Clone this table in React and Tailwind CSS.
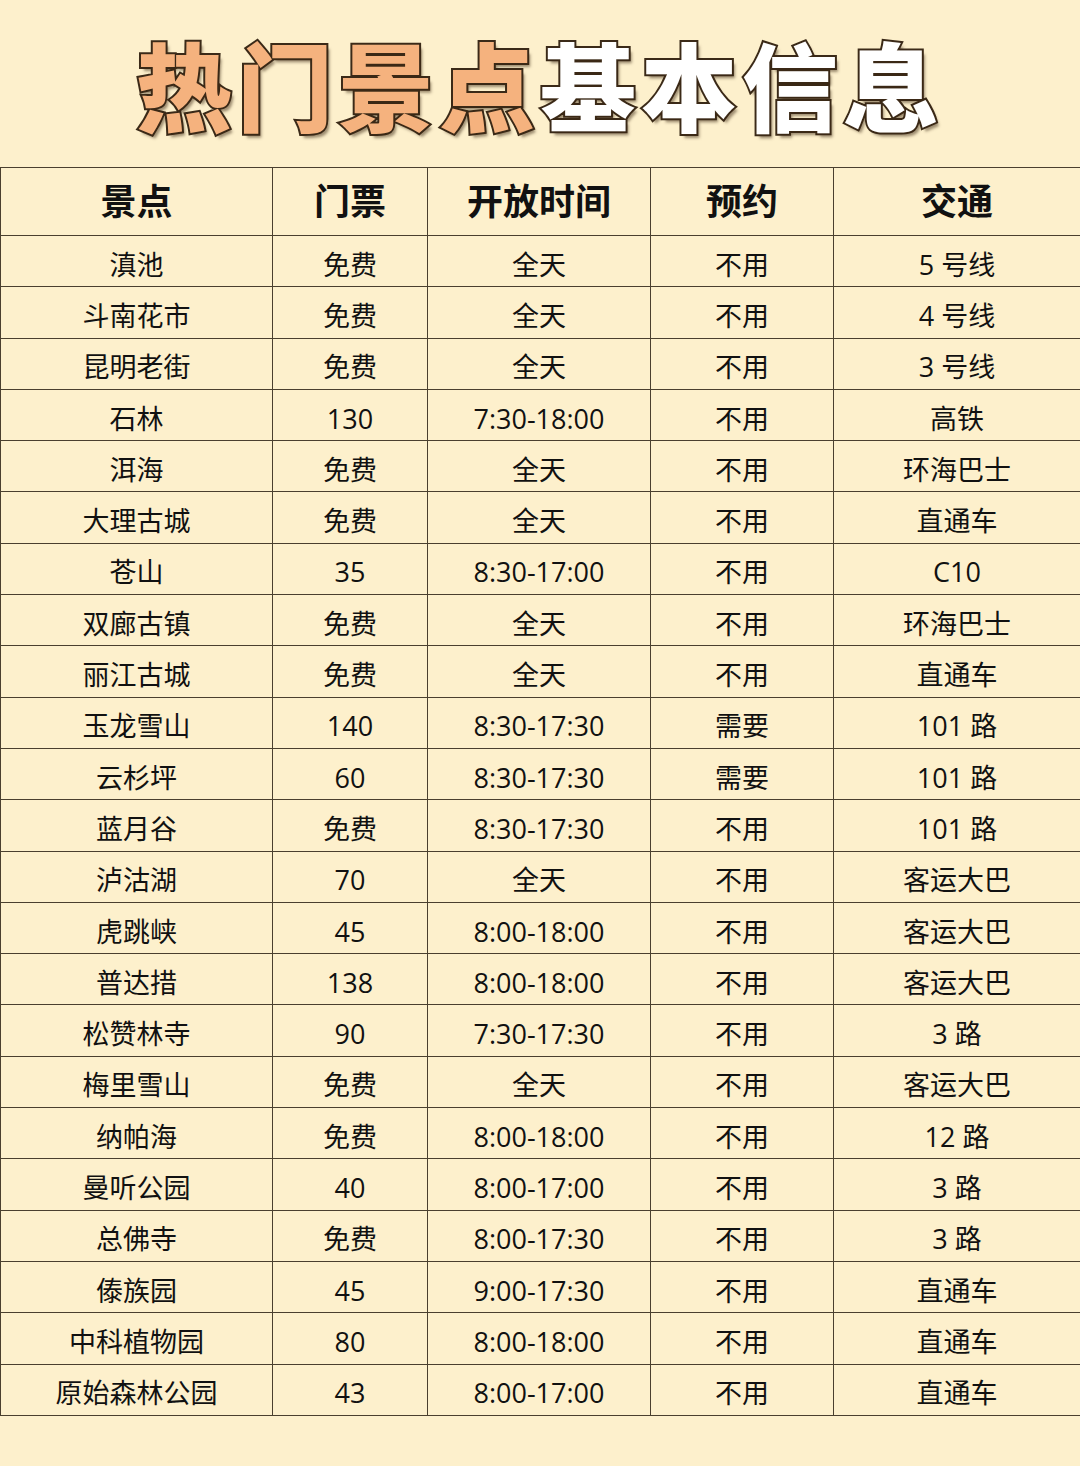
const rows = [
  ["滇池", "免费", "全天", "不用", "5 号线"],
  ["斗南花市", "免费", "全天", "不用", "4 号线"],
  ["昆明老街", "免费", "全天", "不用", "3 号线"],
  ["石林", "130", "7:30-18:00", "不用", "高铁"],
  ["洱海", "免费", "全天", "不用", "环海巴士"],
  ["大理古城", "免费", "全天", "不用", "直通车"],
  ["苍山", "35", "8:30-17:00", "不用", "C10"],
  ["双廊古镇", "免费", "全天", "不用", "环海巴士"],
  ["丽江古城", "免费", "全天", "不用", "直通车"],
  ["玉龙雪山", "140", "8:30-17:30", "需要", "101 路"],
  ["云杉坪", "60", "8:30-17:30", "需要", "101 路"],
  ["蓝月谷", "免费", "8:30-17:30", "不用", "101 路"],
  ["泸沽湖", "70", "全天", "不用", "客运大巴"],
  ["虎跳峡", "45", "8:00-18:00", "不用", "客运大巴"],
  ["普达措", "138", "8:00-18:00", "不用", "客运大巴"],
  ["松赞林寺", "90", "7:30-17:30", "不用", "3 路"],
  ["梅里雪山", "免费", "全天", "不用", "客运大巴"],
  ["纳帕海", "免费", "8:00-18:00", "不用", "12 路"],
  ["曼听公园", "40", "8:00-17:00", "不用", "3 路"],
  ["总佛寺", "免费", "8:00-17:30", "不用", "3 路"],
  ["傣族园", "45", "9:00-17:30", "不用", "直通车"],
  ["中科植物园", "80", "8:00-18:00", "不用", "直通车"],
  ["原始森林公园", "43", "8:00-17:00", "不用", "直通车"],
];

const heads = ["景点", "门票", "开放时间", "预约", "交通"];

const titleStyle = {
  WebkitTextStroke: "4px #3b2a18",
  paintOrder: "stroke fill",
  textShadow: "3px 4px 3px rgba(60,40,20,0.5)",
};

const App = () => {
  return (
    <div
      className="w-[1080px] h-[1466px] bg-[#fdf0cc] text-[#111]"
      style={{ fontFamily: '"Open Sans", "Noto Sans CJK SC", sans-serif' }}
    >
      <div className="h-[167px] flex items-center justify-center pb-[2px]">
        <h1
          className="text-[96px] leading-none font-black tracking-[5px] flex"
          style={{ ...titleStyle, fontFamily: '"Noto Sans CJK SC", sans-serif' }}
        >
          <span className="text-[#f5b27e]">热门景点</span>
          <span className="text-white">基本信息</span>
        </h1>
      </div>
      <table className="w-[1080px] border-collapse table-fixed">
        <colgroup>
          <col className="w-[272px]" />
          <col className="w-[155px]" />
          <col className="w-[223px]" />
          <col className="w-[183px]" />
          <col className="w-[247px]" />
        </colgroup>
        <thead>
          <tr className="h-[68px]">
            {heads.map((h) => (
              <th
                key={h}
                className="border-[1.5px] border-[#4a3f2e] text-[36px] font-bold text-center align-middle leading-none"
              >
                {h}
              </th>
            ))}
          </tr>
        </thead>
        <tbody>
          {rows.map((r, i) => (
            <tr key={i} className="h-[51.3px]">
              {r.map((c, j) => (
                <td
                  key={j}
                  className="border-[1.5px] border-[#4a3f2e] text-[27px] text-center align-middle leading-none pt-[6px]"
                >
                  {c}
                </td>
              ))}
            </tr>
          ))}
        </tbody>
      </table>
    </div>
  );
};

export default App;
